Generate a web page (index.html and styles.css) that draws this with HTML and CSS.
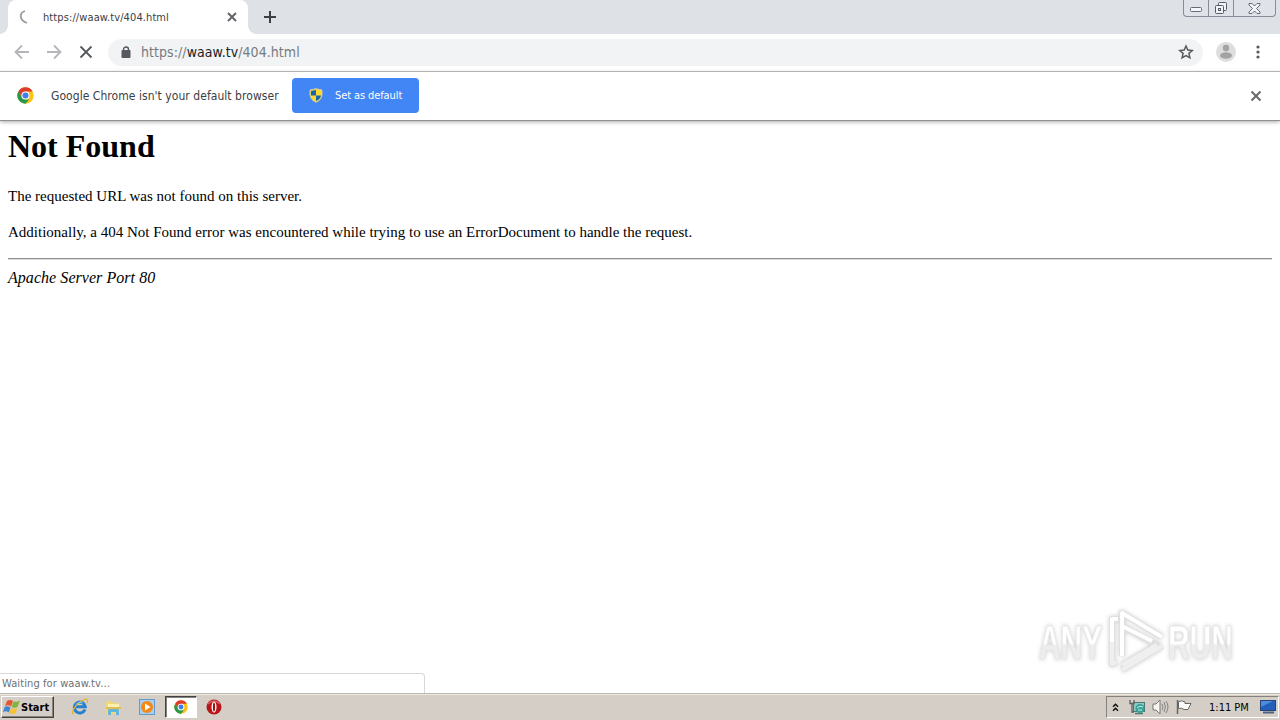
FILE: index.html
```html
<!DOCTYPE html>
<html lang="en">
<head>
    <meta charset="UTF-8">
    <title>https://waaw.tv/404.html</title>
    <link rel="stylesheet" href="styles.css">
</head>
<body>
    <div class="tabstrip">
        <div class="edge"></div>
        <div class="tab">
            <svg class="spinner" width="14" height="14" viewBox="0 0 14 14"><path d="M6 1C0 3 0 10 8 13" fill="none" stroke="#999da2" stroke-width="1.800"/></svg>
            <span class="tab-title">https://waaw.tv/404.html</span>
            <svg width="10" height="10" viewBox="0 0 10 10"><path d="M1 1L9 9M9 1L1 9" stroke="#5f6368" stroke-width="1.900"/></svg>
        </div>
        <div class="edge right"></div>
        <svg class="new-tab" width="12" height="12" viewBox="0 0 12 12"><path d="M6 0V12M0 6H12" stroke="#3c4043" stroke-width="2"/></svg>
        <div class="window-buttons">
            <div class="win-btn min"><svg width="13" height="6" viewBox="0 0 13 6"><rect x=".5" y=".5" width="11" height="4" rx="1" fill="#f5f6f8" stroke="#656b78"/></svg></div>
            <div class="win-btn restore"><svg width="14" height="14" viewBox="0 0 14 14" fill="#f0f2f5" stroke="#555b68"><rect x="4.500" y="1.500" width="8" height="8" rx="1"/><rect x="1.500" y="4.500" width="8" height="8" rx="1"/><rect x="4.500" y="7.500" width="2" height="2"/></svg></div>
            <div class="win-btn close"><svg width="13" height="11" viewBox="0 0 13 11"><path d="M1 .5H4L6.500 3L9 .5H12V2L8.500 5.500L12 9V10.500H9L6.500 8L4 10.500H1V9L4.500 5.500L1 2Z" fill="#f2f4f7" stroke="#656b78"/></svg></div>
        </div>
    </div>

    <div class="toolbar">
        <svg class="nav" width="16" height="16" viewBox="0 0 16 16"><path d="M15 8H2M8 1.500L1.500 8L8 14.500" fill="none" stroke="#b4b6b9" stroke-width="1.800"/></svg>
        <svg class="nav" width="16" height="16" viewBox="0 0 16 16"><path d="M1 8H14M8 1.500L14.500 8L8 14.500" fill="none" stroke="#b4b6b9" stroke-width="1.800"/></svg>
        <svg class="nav" width="16" height="16" viewBox="0 0 16 16"><path d="M2.500 2.500L13.500 13.500M13.500 2.500L2.500 13.500" stroke="#55585d" stroke-width="1.800"/></svg>
        <div class="omnibox">
            <svg class="lock" width="10" height="12" viewBox="0 0 10 12"><path d="M2.500 5V3.500a2.500 2.500 0 0 1 5 0V5" fill="none" stroke="#55585d" stroke-width="1.400"/><rect x=".5" y="4" width="9" height="8" rx="1" fill="#55585d"/></svg>
            <span class="url">https://<b>waaw.tv</b>/404.html</span>
            <svg class="star" width="16" height="16" viewBox="0 0 16 16"><path d="M8 2L9.800 6.100L14.300 6.500L10.900 9.400L11.900 13.800L8 11.500L4.100 13.800L5.100 9.400L1.700 6.500L6.200 6.100Z" fill="none" stroke="#55585d" stroke-width="1.500"/></svg>
        </div>
        <svg class="avatar" width="20" height="20" viewBox="0 0 20 20"><circle cx="10" cy="10" r="10" fill="#dedede"/><circle cx="10" cy="6" r="3.200" fill="#a3a3a3"/><ellipse cx="10" cy="13.500" rx="6" ry="3.200" fill="#a3a3a3"/></svg>
        <svg class="menu" width="4" height="14" viewBox="0 0 4 14" fill="#55585d"><circle cx="2" cy="2" r="1.600"/><circle cx="2" cy="7" r="1.600"/><circle cx="2" cy="12" r="1.600"/></svg>
    </div>

    <div class="infobar">
        <svg class="chrome-logo" width="17" height="17" viewBox="0 0 48 48"><circle cx="24" cy="24" r="23" fill="#fbc116"/><path d="M4 12.500A23 23 0 0 1 44 12.500H24L14 30Z" fill="#dc3b2e"/><path d="M4 12.500L14 30L24 35.500H34L24 47A23 23 0 0 1 4 12.500Z" fill="#29974e"/><circle cx="24" cy="24" r="11.500" fill="#fff"/><circle cx="24" cy="24" r="8.500" fill="#3f7de8"/></svg>
        <span class="infobar-text">Google Chrome isn't your default browser</span>
        <div class="default-btn">
            <svg width="14" height="15" viewBox="0 0 14 15"><path d="M7 .7L13 2V7Q12.500 12 7 14.300Q1.500 12 1 7V2Z" fill="#ffda32"/><path d="M7 2L2 3V7.500H7ZM7 7.500H12Q11.500 11 7 13Z" fill="#1765ac"/><path d="M7 .7L13 2V7Q12.500 12 7 14.300Q1.500 12 1 7V2Z" fill="none" stroke="#c4c8b0" stroke-width="1"/></svg>
            <span>Set as default</span>
        </div>
        <svg class="dismiss" width="12" height="12" viewBox="0 0 12 12"><path d="M1.500 1.500L10.500 10.500M10.500 1.500L1.500 10.500" stroke="#66696d" stroke-width="2"/></svg>
    </div>

    <div class="page">
        <h1>Not Found</h1>
        <p>The requested URL was not found on this server.</p>
        <p>Additionally, a 404 Not Found error was encountered while trying to use an ErrorDocument to handle the request.</p>
        <hr>
        <address>Apache Server Port 80</address>
    </div>

    <div class="status"><span>Waiting for waaw.tv...</span></div>

    <svg class="watermark" width="220" height="76" viewBox="0 0 220 76">
        <defs>
            <linearGradient id="fade" x1="0" y1="0" x2="0" y2="1">
                <stop offset=".52" stop-color="#fff"/>
                <stop offset=".56" stop-color="#ededed"/>
            </linearGradient>
        </defs>
        <g class="mark-text">
            <text transform="translate(9 57) scale(.61 1)">ANY</text>
            <text transform="translate(138 57) scale(.61 1)">RUN</text>
        </g>
        <g class="mark-outline">
            <path d="M92 54V11L132 35"/>
            <path d="M88 17H82V62L87 60"/>
            <path d="M92 24L127 43L92 63M92 68L132 44"/>
        </g>
        <g class="mark-line">
            <path d="M92 54V11L132 35"/>
            <path d="M88 17H82V40"/>
            <path d="M92 24L122 39"/>
        </g>
        <g class="mark-line lower">
            <path d="M82 40V62L87 60"/>
            <path d="M127 43L92 63M92 68L132 44"/>
        </g>
    </svg>

    <div class="taskbar">
        <div class="start">
            <svg width="17" height="16" viewBox="0 0 17 16"><path d="M4 2Q7 0 10 2L8 7.500Q5 5.500 2 7Z" fill="#e8572a"/><path d="M10.500 2.500Q14 3.500 17 1.500L14.500 8Q11.500 9.500 8.500 8Z" fill="#7fb541"/><path d="M1.700 8Q4 6.500 7.500 8.500L5.800 13.500Q3 11.500 0 13Z" fill="#3f86cc"/><path d="M8.200 9Q11 10.500 14.200 9L12.500 14.500Q10 15.500 6.500 14Z" fill="#f7c232"/></svg>
            <span>Start</span>
        </div>
        <div class="task"><svg width="18" height="18" viewBox="0 0 18 18"><path d="M14 11.500A5.500 5.500 0 1 1 14.300 8.800H5" fill="none" stroke="#2581cf" stroke-width="3"/><path d="M3 15.500C-1 17 3 8 9 4S18 0 16 5" fill="none" stroke="#e6b52c" stroke-width="1.400"/><path d="M5 6Q8 3 12 5" fill="none" stroke="#77c4ef" stroke-width="1"/></svg></div>
        <div class="task"><svg width="17" height="17" viewBox="0 0 17 17"><path d="M2 2H7L8 4H15V15H1V3Z" fill="#efd77d"/><path d="M3 5H14V9H3Z" fill="#fff2b0"/><path d="M1 8H16V10H1Z" fill="#dfbd58"/><path d="M3 16V11Q3 10 5 10H12Q14 10 14 11V16H11V13H6V16Z" fill="#62b5dd"/></svg></div>
        <div class="task"><svg width="17" height="17" viewBox="0 0 17 17"><rect x=".5" y=".5" width="15" height="15" fill="#a9cff0" stroke="#659bcc"/><circle cx="8" cy="8" r="6" fill="#f28816"/><path d="M6 4.500L11.500 8L6 11.500Z" fill="#fff"/></svg></div>
        <div class="task active"><svg width="14" height="14" viewBox="0 0 48 48"><circle cx="24" cy="24" r="23" fill="#fbc116"/><path d="M4 12.500A23 23 0 0 1 44 12.500H24L14 30Z" fill="#dc3b2e"/><path d="M4 12.500L14 30L24 35.500H34L24 47A23 23 0 0 1 4 12.500Z" fill="#29974e"/><circle cx="24" cy="24" r="11.500" fill="#fff"/><circle cx="24" cy="24" r="8.500" fill="#3f7de8"/></svg></div>
        <div class="task"><svg width="16" height="16" viewBox="0 0 16 16"><circle cx="8" cy="8" r="7.500" fill="#b71518"/><path d="M2 5Q8-1 14 5" fill="none" stroke="#d8605d" stroke-width="1.500"/><ellipse cx="8" cy="8" rx="2.500" ry="5.500" fill="#fff"/><ellipse cx="8" cy="8" rx="1.100" ry="4.500" fill="#a00e12"/></svg></div>
        <div class="tray">
            <svg class="chevrons" width="7" height="9" viewBox="0 0 7 9"><path d="M1 3.800L3.500 1.300L6 3.800M1 7.800L3.500 5.300L6 7.800" fill="none" stroke="#111" stroke-width="1.500"/></svg>
            <svg class="network" width="17" height="16" viewBox="0 0 17 16"><rect x="4.500" y="3.500" width="11" height="9" fill="#8fc9bd" stroke="#4c7574"/><path d="M6 14.500H14" stroke="#537572" stroke-width="1.500"/><circle cx="11" cy="9.500" r="4.500" fill="#37a29a"/><path d="M8 9Q11 6 14 8M9 11H13" fill="none" stroke="#c6ece4"/><path d="M1 1V4.500H5V1M3 5V13H5" fill="none" stroke="#59625e" stroke-width="1.300"/></svg>
            <svg class="volume" width="18" height="16" viewBox="0 0 18 16"><path d="M1 5H4L8 1V15L4 11H1Z" fill="#f5f5f2" stroke="#777"/><path d="M10 5Q12 8 10 11M12 3Q15 8 12 13M14 2Q18 8 14 14" fill="none" stroke="#858585"/></svg>
            <svg class="flag" width="17" height="16" viewBox="0 0 17 16"><path d="M2.500 2.500Q6 1 9 3V4.500H15L12 10.500H8Q6 8.500 2.500 9.500Z" fill="#fafaf8" stroke="#666"/><path d="M1.500 1V15" stroke="#666" stroke-width="1.500"/></svg>
            <span class="clock">1:11 PM</span>
            <svg class="desktop" width="16" height="14" viewBox="0 0 16 14"><rect x=".5" y=".5" width="15" height="10" fill="#235fba" stroke="#254575"/><path d="M1 1H13L1 7Z" fill="#4e8cda"/><path d="M3 12.500H14" stroke="#4a6386" stroke-width="2"/></svg>
        </div>
    </div>
</body>
</html>
```
FILE: styles.css
```css
* {
    box-sizing: border-box;
}
body {
    margin: 0;
    width: 1280px;
    height: 720px;
    overflow: hidden;
    display: flex;
    flex-direction: column;
    background: #fff;
    font-family: "DejaVu Sans Condensed", "DejaVu Sans", sans-serif;
    font-stretch: condensed;
    font-size: 11px;
    white-space: nowrap;
}
svg {
    display: block;
    flex: none;
}
.tabstrip {
    display: flex;
    height: 34px;
    flex: none;
    background: #dee1e6;
}
.edge {
    width: 8px;
    background: radial-gradient(circle at 0 0, #dee1e6 7.5px, #fff 8px) 0 100% / 8px 8px no-repeat;
}
.edge.right {
    background-image: radial-gradient(circle at 100% 0, #dee1e6 7.5px, #fff 8px);
}
.tab {
    width: 240px;
    display: flex;
    align-items: center;
    padding: 0 11px;
    border-radius: 8px 8px 0 0;
    background: #fff;
}
.spinner {
    margin-right: 10px;
}
.tab-title {
    flex: 1;
    color: #3c4043;
    letter-spacing: .1px;
}
.new-tab {
    margin: 11px 0 0 8px;
}
.window-buttons {
    display: flex;
    height: 17px;
    margin: 0 4px 0 auto;
    border: 1px solid #878c98;
    border-top: 0;
    border-radius: 0 0 4px 4px;
    background: #dfe2e8;
}
.win-btn {
    display: flex;
    align-items: center;
    justify-content: center;
    border-right: 1px solid #878c98;
}
.win-btn.min {
    width: 25px;
    padding-top: 4px;
}
.win-btn.restore {
    width: 25px;
}
.win-btn.close {
    width: 41px;
    border: 0;
}
.toolbar {
    display: flex;
    align-items: center;
    flex: none;
    height: 38px;
    padding: 0 0 1px 14px;
    border-bottom: 1px solid #b4b6b9;
}
.nav {
    margin-right: 16px;
}
.omnibox {
    display: flex;
    align-items: center;
    width: 1095px;
    height: 27px;
    margin-left: -2px;
    padding: 0 9px 0 13px;
    border-radius: 14px;
    background: #f1f3f4;
}
.url {
    flex: 1;
    margin-left: 10px;
    font-size: 14px;
    letter-spacing: .06px;
    color: #777b80;
}
.url b {
    font-weight: normal;
    color: #202124;
}
.avatar {
    margin-left: 13px;
}
.menu {
    margin-left: 20px;
}
.infobar {
    display: flex;
    align-items: center;
    flex: none;
    height: 49px;
    padding: 0 18px 1px 17px;
    border-bottom: 1px solid #909090;
    box-shadow: 0 1px 4px #aaa;
}
.infobar-text {
    width: 228px;
    margin: 0 13px 0 17px;
    font-size: 12px;
    letter-spacing: .05px;
    color: #3c4043;
}
.default-btn {
    display: flex;
    align-items: center;
    gap: 12px;
    width: 127px;
    height: 35px;
    padding-left: 17px;
    border-radius: 4px;
    background: #4285f4;
    color: #fff;
    letter-spacing: -.1px;
}
.dismiss {
    margin-left: auto;
}
.page {
    flex: 1;
    padding: 7px 8px;
    font-family: "Liberation Serif", serif;
    font-size: 15px;
    line-height: 18px;
}
h1 {
    margin: 0 0 22px;
    font-size: 32px;
    line-height: 37px;
}
p {
    margin: 0 0 18px;
}
hr {
    margin: -1px 0 9px;
    border: 0;
    height: 2px;
    border-top: 1px solid #909090;
    border-bottom: 1px solid #ddd;
}
address {
    font-size: 16px;
    letter-spacing: .05px;
}
.status {
    flex: none;
    width: 425px;
    height: 20px;
    padding: 3px 2px;
    line-height: 13px;
    letter-spacing: .1px;
    border: 1px solid #d8d8d8;
    border-width: 1px 1px 0 0;
    border-radius: 0 4px 0 0;
    color: #6d7074;
}
.watermark {
    position: absolute;
    left: 1030px;
    top: 602px;
    filter: drop-shadow(0 0 2px #ccc);
}
.mark-text {
    font-family: "Liberation Sans", sans-serif;
    font-size: 49px;
    font-weight: bold;
    fill: url(#fade);
    stroke: #e8e8e8;
    stroke-width: .8;
}
.mark-outline {
    fill: none;
    stroke: #e0e0e0;
    stroke-width: 6;
    stroke-linejoin: round;
}
.mark-line {
    fill: none;
    stroke: #fff;
    stroke-width: 4;
    stroke-linejoin: round;
}
.mark-line.lower {
    stroke: #efefef;
}
.taskbar {
    display: flex;
    flex: none;
    height: 27px;
    padding: 2px 0 2px 1px;
    border-top: 1px solid #bab9b1;
    background: #d5cec6;
    box-shadow: inset 0 1px #eeeae3;
}
.start {
    display: flex;
    align-items: center;
    gap: 1px;
    width: 53px;
    height: 22px;
    margin-right: 10px;
    padding-left: 1px;
    border: 1px solid;
    border-color: #fff #434343 #434343 #fff;
    box-shadow: inset -1px -1px #85817b;
    font-size: 11px;
    font-weight: bold;
}
.task {
    display: flex;
    align-items: center;
    justify-content: center;
    width: 32px;
    height: 22px;
    margin-right: 1.5px;
}
.task.active {
    border: 1px solid;
    border-color: #424242 #fff #fff #424242;
    box-shadow: inset 1px 1px #85817b;
    background: #fff;
}
.tray {
    display: flex;
    align-items: center;
    width: 173px;
    height: 22px;
    margin: 0 1px 0 auto;
    padding-left: 5px;
    border: 1px solid;
    border-color: #85817b #fff #fff #85817b;
}
.network {
    margin-left: 10px;
}
.volume {
    margin-left: 6px;
}
.flag {
    margin-left: 6px;
}
.clock {
    width: 40px;
    margin: 0 11px 0 16px;
}
```
